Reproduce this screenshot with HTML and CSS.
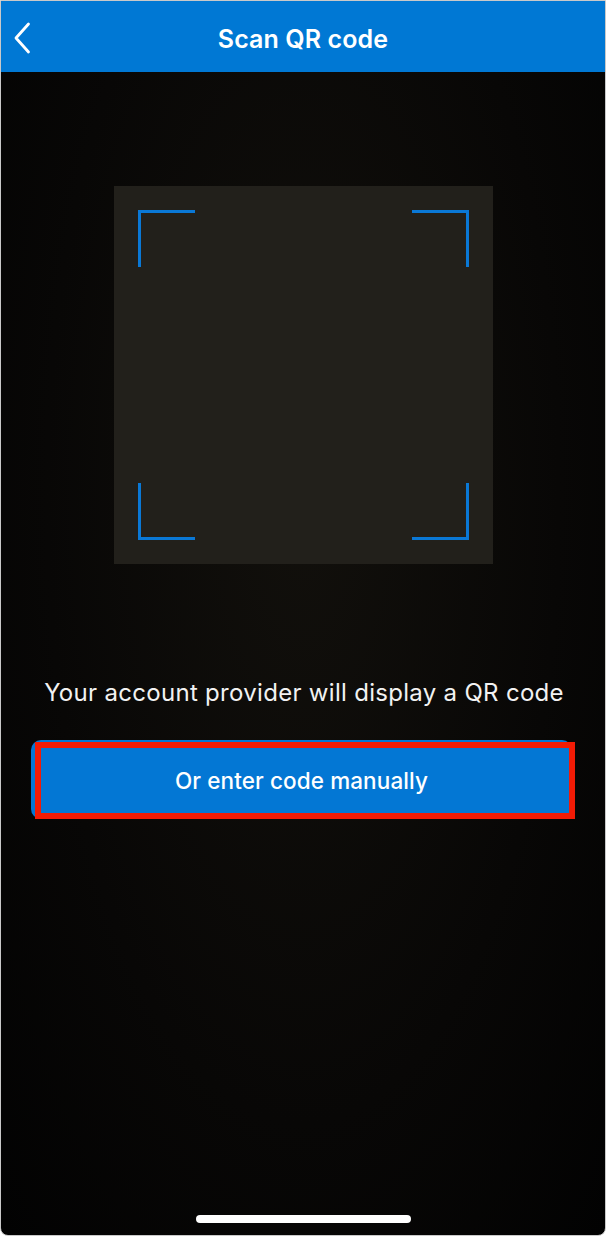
FILE: index.html
```html
<!DOCTYPE html>
<html lang="en">
<head>
    <meta charset="UTF-8">
    <meta name="viewport" content="width=device-width, initial-scale=1.0">
    <title>Scan QR code</title>
    <link rel="stylesheet" href="styles.css">
</head>
<body>
    <div class="screen">
        <!-- Top bar -->
        <header class="topbar">
            <button class="back" aria-label="Back">
                <svg width="18" height="32" viewBox="0 0 18 32">
                    <path d="M15.5 2 L3 16 L15.5 30" fill="none" stroke="#fff" stroke-width="2.8" stroke-linecap="round" stroke-linejoin="round"/>
                </svg>
            </button>
            <h1>Scan QR code</h1>
        </header>

        <!-- Camera view -->
        <main class="camera">
            <div class="viewfinder">
                <span class="corner tl"></span>
                <span class="corner tr"></span>
                <span class="corner bl"></span>
                <span class="corner br"></span>
            </div>

            <p class="hint">Your account provider will display a QR code</p>

            <div class="manual-wrap">
                <button class="manual">Or enter code manually</button>
                <span class="highlight"></span>
            </div>
        </main>

        <div class="home-bar"></div>
    </div>
</body>
</html>
```

FILE: styles.css
```css
* {
    box-sizing: border-box;
}
body {
    margin: 0;
    padding: 0;
    background: #fff;
    font-family: Inter, "Noto Sans", Arial, sans-serif;
}
.screen {
    width: 606px;
    height: 1236px;
    display: flex;
    flex-direction: column;
    background: radial-gradient(ellipse at 50% 40%, #12100c 0%, #080706 60%, #020202 100%);
    border: 1px solid #c9c9c9;
    border-radius: 0 0 8px 8px;
    overflow: hidden;
}
.topbar {
    height: 71px;
    background: #0078d4;
    display: flex;
    align-items: center;
    justify-content: center;
    position: relative;
    flex-shrink: 0;
}
.topbar h1 {
    margin: 0;
    color: #fff;
    font-size: 25px;
    font-weight: 600;
    letter-spacing: 0.1px;
    padding-top: 4px;
}
.back {
    position: absolute;
    left: 12px;
    top: 21px;
    background: none;
    border: none;
    padding: 0;
    display: flex;
}
.camera {
    display: flex;
    flex-direction: column;
    align-items: center;
    padding-top: 114px;
}
.viewfinder {
    width: 379px;
    height: 378px;
    background: #22201b;
    position: relative;
    margin-left: 1px;
}
.corner {
    position: absolute;
    width: 57px;
    height: 57px;
    border: 0 solid #0a78d6;
}
.tl {
    left: 24px;
    top: 24px;
    border-top-width: 3px;
    border-left-width: 3px;
}
.tr {
    right: 24px;
    top: 24px;
    border-top-width: 3px;
    border-right-width: 3px;
}
.bl {
    left: 24px;
    bottom: 24px;
    border-bottom-width: 3px;
    border-left-width: 3px;
}
.br {
    right: 24px;
    bottom: 24px;
    border-bottom-width: 3px;
    border-right-width: 3px;
}
.hint {
    margin: 114px 0 0;
    color: #f2f2f2;
    font-size: 24px;
    line-height: 30px;
    font-weight: 400;
    letter-spacing: 0.3px;
    padding-left: 2px;
}
.manual-wrap {
    position: relative;
    margin-top: 32px;
    width: 541px;
    margin-left: -3px;
}
.manual {
    width: 100%;
    height: 79px;
    background: #0377d4;
    color: #fff;
    border: none;
    border-radius: 10px;
    font-family: inherit;
    font-size: 22.5px;
    font-weight: 500;
    letter-spacing: 0.1px;
    padding-top: 2px;
}
.highlight {
    position: absolute;
    left: 4px;
    right: -3px;
    top: 2px;
    bottom: 0;
    border: 6px solid #f21b05;
    pointer-events: none;
}
.home-bar {
    margin: auto auto 12px;
    width: 215px;
    height: 8px;
    border-radius: 4px;
    background: #fff;
}
```
